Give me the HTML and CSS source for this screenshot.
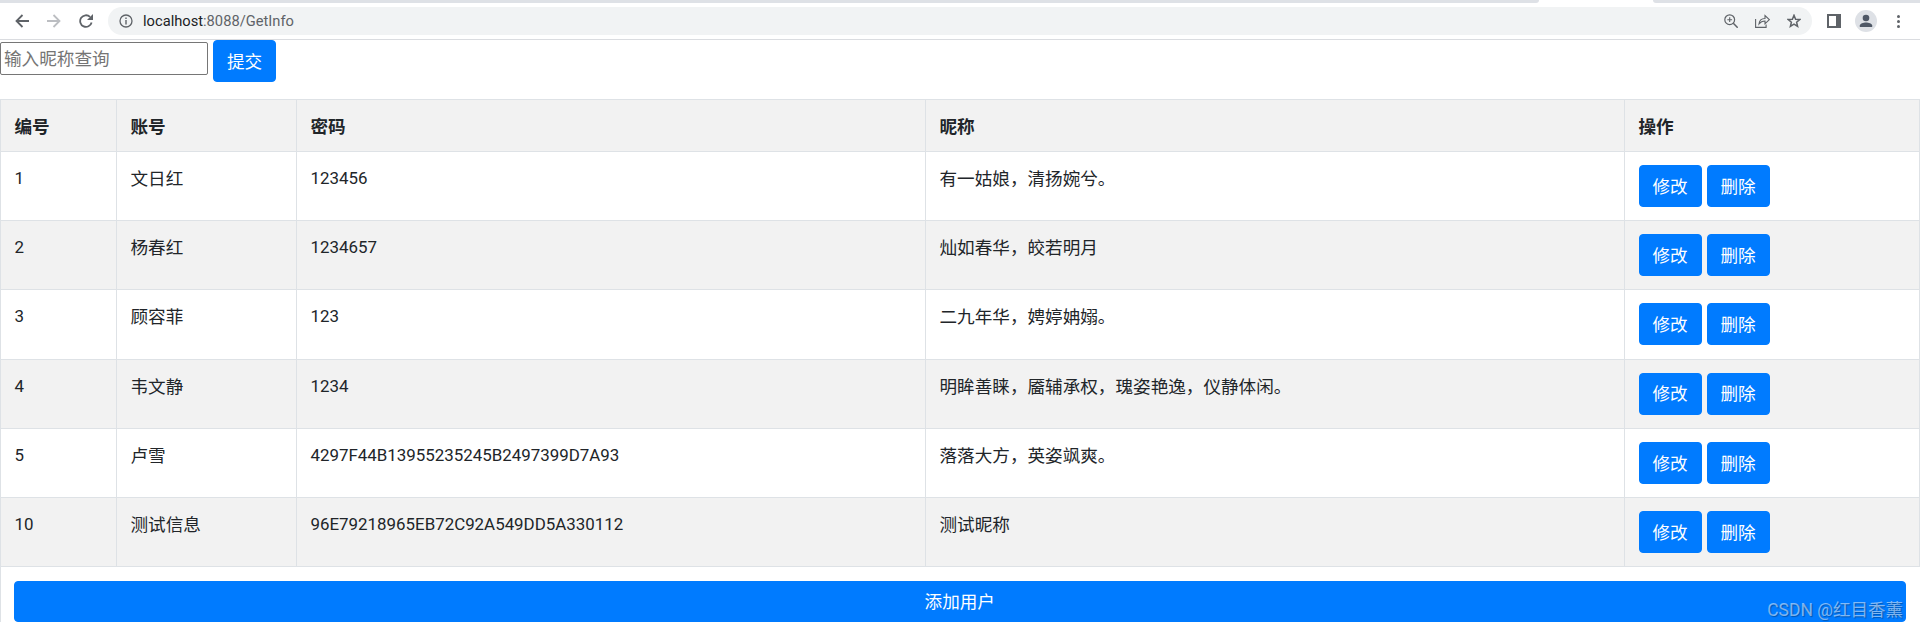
FILE: index.html
```html
<!DOCTYPE html>
<html lang="zh-CN">
<head>
  <meta charset="UTF-8" />
  <title>GetInfo</title>
  <link rel="stylesheet" href="styles.css">
</head>
<body>
  <div class="tab-strip">
    <span class="tab-strip-left"></span>
    <span class="tab-strip-right"></span>
  </div>
  <header class="toolbar">
    <svg class="nav-icon" viewBox="0 0 14 14"><path d="M14 7H1.500M7.500 1L1.500 7l6 6" fill="none" stroke="#5f6368" stroke-width="1.800"/></svg>
    <svg class="nav-icon" viewBox="0 0 14 14"><path d="M0 7h12.500M6.500 1l6 6-6 6" fill="none" stroke="#bcbec2" stroke-width="1.800"/></svg>
    <svg class="nav-icon" viewBox="0 0 14 14"><path d="M12.600 8.500A5.800 5.800 0 1 1 11 2.900" fill="none" stroke="#5f6368" stroke-width="1.800"/><path d="M14 0v6H8z" fill="#5f6368"/></svg>
    <div class="omnibox">
      <svg class="info-icon" viewBox="0 0 14 14"><circle cx="7" cy="7" r="6" fill="none" stroke="#5f6368" stroke-width="1.300"/><path d="M7 6v4.500M7 3.400v1.500" stroke="#5f6368" stroke-width="1.400"/></svg>
      <span class="url"><span class="url-host">localhost</span>:8088/GetInfo</span>
      <span class="omnibox-spacer"></span>
      <svg class="omni-icon" viewBox="0 0 14 14"><circle cx="5.700" cy="5.700" r="4.900" fill="none" stroke="#5f6368" stroke-width="1.200"/><path d="M9.300 9.300L13.700 13.700" stroke="#5f6368" stroke-width="1.500"/><path d="M3.300 5.700h4.800M5.700 3.300v4.800" stroke="#5f6368" stroke-width="1.100"/></svg>
      <svg class="omni-icon" viewBox="0 0 15 14"><path d="M.6 5v8.400h10.500v-2.800" fill="none" stroke="#5f6368" stroke-width="1.100"/><path d="M4 10c.3-3.400 2.700-5.400 6-5.500V1.500l4.300 4.200L10 9.800V7C7.500 7 5.500 8 4 10z" fill="none" stroke="#5f6368" stroke-width="1.100"/></svg>
      <svg class="omni-icon" viewBox="0 0 14 14"><path d="M7 1.300l1.600 3.900 4.200.3-3.200 2.700 1 4.100L7 10.100l-3.600 2.200 1-4.100L1.200 5.500l4.200-.3z" fill="none" stroke="#5f6368" stroke-width="1.500"/></svg>
    </div>
    <svg class="side-icon" viewBox="0 0 14 14"><rect width="14" height="14" fill="#5f6368"/><rect x="2" y="2" width="7" height="10" fill="#fff"/></svg>
    <span class="avatar">
      <svg viewBox="0 0 22 22"><circle cx="11" cy="8" r="3.300" fill="#4f5866"/><path d="M4.800 17v-1.400c0-2.200 3.700-3.200 6.200-3.200s6.200 1 6.200 3.200V17z" fill="#4f5866"/></svg>
    </span>
    <span class="menu-dots"><i></i><i></i><i></i></span>
  </header>

  <form class="search-form">
    <input class="search-input" type="text" placeholder="输入昵称查询" />
    <button class="btn" type="button">提交</button>
  </form>

  <table class="user-table">
    <colgroup>
      <col class="col-id" />
      <col class="col-account" />
      <col class="col-password" />
      <col class="col-nick" />
      <col class="col-action" />
    </colgroup>
    <thead>
      <tr><th>编号</th><th>账号</th><th>密码</th><th>昵称</th><th>操作</th></tr>
    </thead>
    <tbody>
      <tr>
        <td class="code">1</td><td>文日红</td><td class="code">123456</td><td>有一姑娘，清扬婉兮。</td>
        <td class="action-cell"><div class="actions"><button class="btn">修改</button><button class="btn">删除</button></div></td>
      </tr>
      <tr>
        <td class="code">2</td><td>杨春红</td><td class="code">1234657</td><td>灿如春华，皎若明月</td>
        <td class="action-cell"><div class="actions"><button class="btn">修改</button><button class="btn">删除</button></div></td>
      </tr>
      <tr>
        <td class="code">3</td><td>顾容菲</td><td class="code">123</td><td>二九年华，娉婷姌嫋。</td>
        <td class="action-cell"><div class="actions"><button class="btn">修改</button><button class="btn">删除</button></div></td>
      </tr>
      <tr>
        <td class="code">4</td><td>韦文静</td><td class="code">1234</td><td>明眸善睐，靥辅承权，瑰姿艳逸，仪静体闲。</td>
        <td class="action-cell"><div class="actions"><button class="btn">修改</button><button class="btn">删除</button></div></td>
      </tr>
      <tr>
        <td class="code">5</td><td>卢雪</td><td class="code">4297F44B13955235245B2497399D7A93</td><td>落落大方，英姿飒爽。</td>
        <td class="action-cell"><div class="actions"><button class="btn">修改</button><button class="btn">删除</button></div></td>
      </tr>
      <tr>
        <td class="code">10</td><td>测试信息</td><td class="code">96E79218965EB72C92A549DD5A330112</td><td>测试昵称</td>
        <td class="action-cell"><div class="actions"><button class="btn">修改</button><button class="btn">删除</button></div></td>
      </tr>
      <tr class="add-row">
        <td colspan="5"><button class="btn btn-block">添加用户</button></td>
      </tr>
    </tbody>
  </table>

  <div class="watermark">CSDN @红目香薰</div>
</body>
</html>
```

FILE: styles.css
```css
:root {
  --primary: #007bff;
  --line: #dee2e6;
  --stripe: #f2f2f2;
  --text: #212529;
}
html, body {
  height: 100%;
}
body {
  margin: 0;
  position: relative;
  overflow: hidden;
  background: #fff;
  color: var(--text);
  font-family: "Roboto", "Noto Sans CJK SC", sans-serif;
  font-size: 17.6px;
  line-height: 1.5;
}

/* browser chrome */
.tab-strip {
  display: flex;
  height: 3px;
}
.tab-strip-left {
  width: 1539px;
  background: #dee1e6;
  border-bottom-right-radius: 6px;
}
.tab-strip-right {
  margin-left: 114px;
  flex: 1;
  background: #dee1e6;
  border-bottom-left-radius: 6px;
}
.toolbar {
  display: flex;
  align-items: center;
  height: 36px;
  border-bottom: 1px solid #dadce0;
}
.nav-icon {
  width: 14px;
  height: 14px;
  margin-left: 15px;
  flex: none;
}
.nav-icon + .nav-icon {
  margin-left: 18px;
}
.omnibox {
  display: flex;
  align-items: center;
  flex: none;
  width: 1704px;
  height: 28px;
  margin-left: 15px;
  padding: 0 11px;
  box-sizing: border-box;
  background: #f1f3f4;
  border-radius: 14px;
}
.info-icon {
  width: 14px;
  height: 14px;
  margin-right: 10px;
}
.url {
  font-size: 14.7px;
  color: #5f6368;
}
.url-host {
  color: #202124;
}
.omnibox-spacer {
  flex: 1;
}
.omni-icon {
  width: 14px;
  height: 14px;
  margin-left: 17px;
}
.omni-icon:nth-of-type(3) {
  width: 15px;
}
.side-icon {
  width: 14px;
  height: 14px;
  margin-left: 15px;
  flex: none;
}
.avatar {
  display: flex;
  width: 22px;
  height: 22px;
  margin-left: 14px;
  border-radius: 50%;
  background: #dee1e6;
  flex: none;
}
.menu-dots {
  display: flex;
  flex-direction: column;
  gap: 2px;
  margin-left: 20px;
}
.menu-dots i {
  width: 3px;
  height: 3px;
  border-radius: 50%;
  background: #5f6368;
}

/* search */
.search-form {
  display: flex;
  align-items: flex-start;
  gap: 5px;
  height: 59px;
}
.search-input {
  width: 208px;
  height: 33px;
  margin: 2px 0 0;
  padding: 1px 3px;
  box-sizing: border-box;
  border: 1px solid #767676;
  border-radius: 2px;
  font: inherit;
}
.search-input::placeholder {
  color: #757575;
}
.btn {
  width: 63px;
  height: 42px;
  padding: 2px 0 0;
  border: 1px solid var(--primary);
  border-radius: 4px;
  background: var(--primary);
  color: #fff;
  font: inherit;
}
.btn-block {
  display: block;
  width: 100%;
  height: 41px;
}
.actions {
  display: flex;
  gap: 5px;
}

/* table */
.user-table {
  width: 100%;
  table-layout: fixed;
  border-collapse: collapse;
}
.col-id { width: 116px; }
.col-account { width: 180px; }
.col-password { width: 629px; }
.col-nick { width: 699px; }
.user-table th,
.user-table td {
  padding: 14px 13.5px 8px;
  border: 1px solid var(--line);
  text-align: left;
  vertical-align: top;
}
.user-table th {
  height: 52px;
  box-sizing: border-box;
  font-weight: 700;
}
.user-table thead tr,
.user-table tbody tr:nth-child(even) {
  background: var(--stripe);
}
.user-table tbody td {
  height: 69.2px;
  box-sizing: border-box;
}
.user-table tbody td.code {
  font-size: 16.9px;
}
.user-table tbody td.action-cell {
  padding-top: 13px;
}
.user-table .add-row td {
  height: auto;
  padding: 14px 14px 0 13px;
  border: 0;
  border-left: 1px solid var(--line);
}

.watermark {
  position: absolute;
  right: 17px;
  bottom: 5px;
  color: rgba(255, 255, 255, 0.5);
  text-shadow: 1px 1px 1px rgba(0, 0, 0, 0.3);
  font-size: 17.5px;
  line-height: 26px;
}
```
